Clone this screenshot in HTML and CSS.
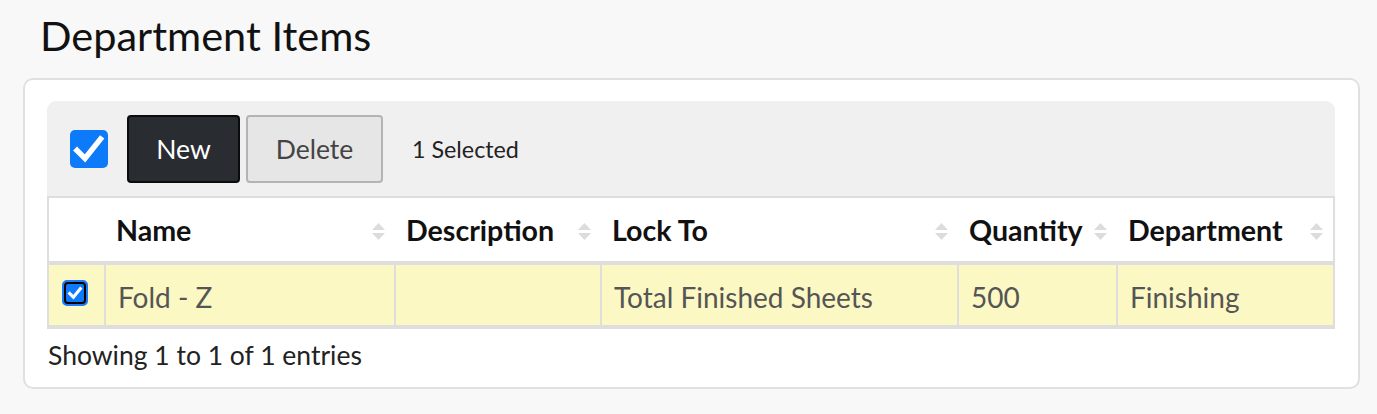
FILE: index.html
```html
<!DOCTYPE html>
<html lang="en">
<head>
<meta charset="utf-8">
<title>Department Items</title>
<link rel="stylesheet" href="styles.css">
</head>
<body>
<div class="page">
  <h1 class="title">Department Items</h1>
  <div class="card">
    <div class="toolbar">
      <span class="cb-lg">
        <svg width="38" height="38" viewBox="0 0 38 38"><path d="M7 20.5 L15 28.5 L30.5 9" fill="none" stroke="#fff" stroke-width="5.5" stroke-linecap="square" stroke-linejoin="miter"/></svg>
      </span>
      <button class="btn btn-dark">New</button>
      <button class="btn btn-light">Delete</button>
      <span class="sel">1 Selected</span>
    </div>
    <table class="grid">
      <colgroup>
        <col class="w-check">
        <col class="w-name">
        <col class="w-desc">
        <col class="w-lock">
        <col class="w-qty">
        <col class="w-dept">
      </colgroup>
      <thead>
        <tr>
          <th class="c-check"></th>
          <th><div class="th"><span>Name</span><svg class="sort" width="13" height="17" viewBox="0 0 13 17"><path d="M6.5 0 L13 7 L0 7 Z M0 10 L13 10 L6.5 17 Z" fill="#dcdcdc"/></svg></div></th>
          <th><div class="th"><span>Description</span><svg class="sort" width="13" height="17" viewBox="0 0 13 17"><path d="M6.5 0 L13 7 L0 7 Z M0 10 L13 10 L6.5 17 Z" fill="#dcdcdc"/></svg></div></th>
          <th><div class="th"><span>Lock To</span><svg class="sort" width="13" height="17" viewBox="0 0 13 17"><path d="M6.5 0 L13 7 L0 7 Z M0 10 L13 10 L6.5 17 Z" fill="#dcdcdc"/></svg></div></th>
          <th><div class="th"><span>Quantity</span><svg class="sort" width="13" height="17" viewBox="0 0 13 17"><path d="M6.5 0 L13 7 L0 7 Z M0 10 L13 10 L6.5 17 Z" fill="#dcdcdc"/></svg></div></th>
          <th><div class="th"><span>Department</span><svg class="sort" width="13" height="17" viewBox="0 0 13 17"><path d="M6.5 0 L13 7 L0 7 Z M0 10 L13 10 L6.5 17 Z" fill="#dcdcdc"/></svg></div></th>
        </tr>
      </thead>
      <tbody>
        <tr class="selected">
          <td class="c-check">
            <span class="cb-sm">
              <svg width="17" height="17" viewBox="0 0 17 17"><path d="M3.5 9 L7 12.5 L13.5 4.5" fill="none" stroke="#fff" stroke-width="3" stroke-linecap="square"/></svg>
            </span>
          </td>
          <td>Fold - Z</td>
          <td></td>
          <td>Total Finished Sheets</td>
          <td>500</td>
          <td>Finishing</td>
        </tr>
      </tbody>
    </table>
    <div class="info">Showing 1 to 1 of 1 entries</div>
  </div>
</div>
</body>
</html>
```

FILE: styles.css
```css
* { box-sizing: border-box; }

body {
  margin: 0;
  background: #f8f8f8;
  font-family: Lato, "Open Sans", sans-serif;
  color: #222;
}

.page {
  padding: 0 17px 0 23px;
}

.title {
  margin: 0;
  padding: 11px 0 0 17px;
  height: 78px;
  font-size: 41.5px;
  font-weight: 400;
  line-height: 48px;
  color: #111;
}

.card {
  background: #fff;
  border: 2px solid #e0e0e0;
  border-radius: 10px;
  padding: 21px 23px 0 22px;
  height: 311px;
}

.toolbar {
  display: flex;
  align-items: center;
  height: 95px;
  background: #f0f0f0;
  border-radius: 9px 9px 0 0;
  padding: 0 0 0 23px;
}

.cb-lg {
  width: 38px;
  height: 38px;
  border-radius: 5px;
  background: #0d7bf9;
  display: flex;
}

.btn {
  height: 68px;
  border-radius: 4px;
  font-family: Lato, "Open Sans", sans-serif;
  font-size: 26.5px;
  padding: 0;
  cursor: pointer;
}

.btn-dark {
  margin-left: 19px;
  width: 113px;
  background: #292d31;
  border: 2px solid #0b0b0b;
  color: #fff;
}

.btn-light {
  margin-left: 6px;
  width: 137px;
  background: #e6e6e6;
  border: 2px solid #b4b4b4;
  color: #444;
}

.sel {
  margin-left: 29px;
  font-size: 23.3px;
  color: #222;
}

.grid {
  width: 100%;
  border-collapse: collapse;
  table-layout: fixed;
  border: 2px solid #dedede;
}

.w-check { width: 57px; }
.w-name { width: 290px; }
.w-desc { width: 206px; }
.w-lock { width: 357px; }
.w-qty { width: 159px; }
.w-dept { width: auto; }

.grid th {
  height: 66px;
  padding: 0 10px 0 11px;
  text-align: left;
  font-size: 28.6px;
  font-weight: 700;
  color: #111;
  border-bottom: 4px solid #dedede;
  background: #fff;
}

.th {
  display: flex;
  align-items: center;
  justify-content: space-between;
}

.sort {
  flex: none;
  margin-top: 4px;
}

.grid td {
  height: 64px;
  padding: 3px 12px 0;
  font-size: 28px;
  color: #555;
  background: #fcf8c4;
  border-left: 2px solid #dedede;
  border-bottom: 4px solid #dedede;
}

.grid td.c-check {
  border-left: none;
  padding: 0 0 0 13px;
}

.cb-sm {
  display: flex;
  width: 26px;
  height: 26px;
  border: 2px solid #1a7cf7;
  border-radius: 5px;
  background: #1a7cf7;
  margin-top: -4px;
}

.cb-sm svg {
  display: block;
  width: 22px;
  height: 22px;
  border: 2px solid #000;
  border-radius: 4px;
  background: #0d7bf9;
}

.info {
  padding-top: 10px;
  padding-left: 1px;
  font-size: 26.5px;
  color: #222;
}
```
